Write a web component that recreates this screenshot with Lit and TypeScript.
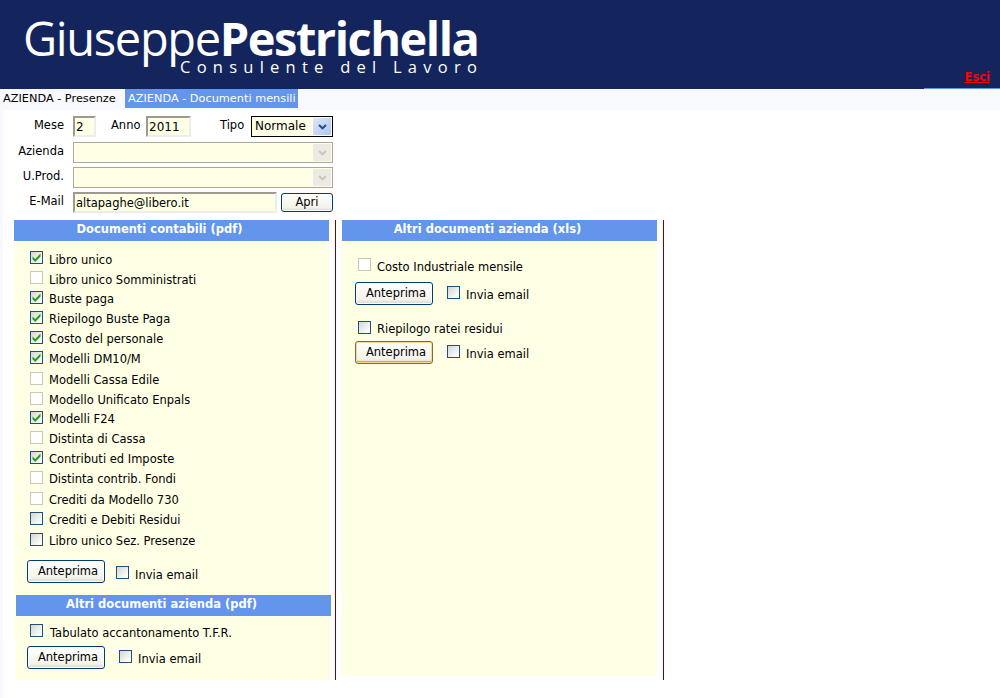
import { LitElement, html, css, svg } from "lit";
import { customElement } from "lit/decorators.js";

interface Doc { label: string; state: "on" | "off" | "dis"; h: number; low?: boolean; }
const DOCS: Doc[] = [
  { label: "Libro unico", state: "on", h: 20, low: true },
  { label: "Libro unico Somministrati", state: "dis", h: 20, low: true },
  { label: "Buste paga", state: "on", h: 20 },
  { label: "Riepilogo Buste Paga", state: "on", h: 20 },
  { label: "Costo del personale", state: "on", h: 20 },
  { label: "Modelli DM10/M", state: "on", h: 21 },
  { label: "Modelli Cassa Edile", state: "dis", h: 20 },
  { label: "Modello Unificato Enpals", state: "dis", h: 19 },
  { label: "Modelli F24", state: "on", h: 20 },
  { label: "Distinta di Cassa", state: "dis", h: 20 },
  { label: "Contributi ed Imposte", state: "on", h: 20 },
  { label: "Distinta contrib. Fondi", state: "dis", h: 21 },
  { label: "Crediti da Modello 730", state: "dis", h: 20 },
  { label: "Crediti e Debiti Residui", state: "off", h: 21 },
  { label: "Libro unico Sez. Presenze", state: "off", h: 20 },
];

const check = svg`<svg viewBox="0 0 11 11" width="11" height="11"><path d="M1.5 4.5 L4.2 7 L9.5 1.5 L9.5 4.5 L4.2 10 L1.5 7.2 Z" fill="#21a121"/></svg>`;
const chevron = svg`<svg viewBox="0 0 9 6" width="9" height="6"><path d="M1 1 L4.5 4.3 L8 1" fill="none" stroke="currentColor" stroke-width="2"/></svg>`;

@customElement("app-root")
export class AppRoot extends LitElement {
  static styles = css`
    :host { display: block; width: 1000px; height: 698px; overflow: hidden; background: #fff; font-family: "DejaVu Sans", Verdana, sans-serif; font-size: 11.5px; color: #000; }
    * { box-sizing: border-box; }
    .header { height: 89px; background: #14245c; display: flex; justify-content: space-between; padding-left: 23px; }
    .logo { width: 456px; padding-top: 13px; color: #fff; }
    .logo-name { font-family: "Open Sans", sans-serif; font-size: 47px; line-height: 50px; letter-spacing: -1.35px; white-space: nowrap; }
    .logo-name b { font-weight: 700; letter-spacing: -1.5px; }
    .logo-sub { font-family: "Open Sans", sans-serif; font-size: 16.5px; line-height: 14px; letter-spacing: 6.25px; margin: -3px 0 0 157px; white-space: nowrap; }
    .header-right { width: 76px; display: flex; flex-direction: column; justify-content: flex-end; align-items: flex-end; }
    .esci { color: #f00; font-weight: 700; font-size: 11.5px; line-height: 14px; margin: 0 10px 4px 0; text-decoration: underline; }
    .header-line { width: 76px; height: 1px; background: #6495ed; }
    .tabs { height: 21px; background: #f8f9ff; display: flex; padding-left: 3px; align-items: flex-start; font-size: 11.3px; }
    .tab { height: 19px; line-height: 19px; width: 122px; white-space: nowrap; }
    .tab.active { background: #6495ed; color: #fff; padding: 0 0 0 3px; width: 173px; }
    .body { border-left: 3px solid #f8f9ff; height: 588px; }
    .form { padding-top: 6px; width: 330px; }
    .row { display: grid; grid-template-columns: 61px 1fr; column-gap: 9px; align-items: start; }
    .row1 { height: 26px; }
    .row2 { height: 25px; }
    .row-main { display: flex; align-items: flex-start; }
    .lbl { text-align: right; line-height: 18px; }
    .input { height: 21px; background: #ffffe6; border: 2px solid #ededed; border-left-color: #9c9a91; border-top-color: #9c9a91; font-size: 12px; line-height: 17px; padding: 1px 0 0 1px; color: #000; }
    .input.m { width: 23px; }
    .input.y { width: 45px; }
    .input.mail { width: 204px; font-size: 11.5px; }
    .sel { height: 21px; background: #ffffe6; border: 1px solid #aca899; display: flex; justify-content: flex-end; align-items: center; padding: 1px; width: 260px; }
    .sel .arrow, .tipo .arrow { width: 18px; height: 17px; display: flex; align-items: center; justify-content: center; border-radius: 1px; }
    .sel .arrow { background: #eceae2; color: #c9c7ba; }
    .tipo { width: 82px; height: 21px; background: #ffffe6; border: 1px solid #000; display: flex; justify-content: space-between; align-items: center; padding: 1px; line-height: 17px; font-size: 12px; }
    .tipo span { padding-left: 2px; }
    .tipo .arrow { background: linear-gradient(135deg, #dbe6fb, #afc6f4); color: #2a4a8c; }
    .mini { line-height: 18px; }
    .mini.anno { margin-left: 15px; width: 35px; }
    .mini.tp { margin-left: 29px; width: 31px; }
    .btn { height: 23px; border: 1px solid #003c74; border-radius: 3px; background: linear-gradient(#fff, #f3f2ea 80%, #d9d5c8); box-shadow: inset 0 0 0 1px #fff; display: flex; align-items: center; justify-content: center; line-height: 1; padding: 1px 0 0 4px; white-space: nowrap; }
    .btn.apri { width: 52px; height: 19px; margin: 1px 0 0 4px; padding: 0; }
    .btn.prev { width: 78px; flex: none; }
    .btn.focus { border-color: #7a6a3c; box-shadow: inset 0 0 0 1px #fbd98a, inset 0 -2px 0 #eda52d; }
    .columns { display: flex; align-items: stretch; height: 460px; margin-top: 7px; padding-left: 11px; }
    .col-left { width: 317px; background: linear-gradient(#ffffe6, #ffffe6) no-repeat 0 0 / 2px 420px; }
    .sep { width: 1px; background: #800000; margin-left: 4px; }
    .col-right { width: 315px; margin-left: 6px; background: #ffffe6; height: 456px; }
    .sep2 { width: 1px; background: #800000; margin-left: 6px; }
    .left-top { width: 315px; height: 375px; background: #ffffe6; }
    .left-bottom { margin-left: 2px; width: 315px; height: 85px; background: #ffffe6; }
    .h { background: #6495ed; color: #fff; font-weight: 700; height: 21px; line-height: 19px; text-align: center; white-space: nowrap; padding-right: 24px; }
    .list { padding: 10px 0 0 16px; }
    .list.l2 { padding: 8px 0 0 14px; }
    .list.r1 { padding-top: 17px; }
    .list.r2 { padding-top: 16px; }
    .item { display: flex; align-items: flex-start; line-height: 15px; white-space: nowrap; }
    .cb { width: 13px; height: 13px; flex: none; border: 1px solid #1c5180; background: linear-gradient(135deg, #d6d6cf, #fbfbf8 80%); display: block; margin-right: 6px; }
    .cb.dis { border-color: #cac8bb; background: #fff; }
    .cb svg { display: block; }
    .item .t { padding-top: 1px; }
    .item.low .t { padding-top: 2px; }
    .item.tfr .cb { margin-right: 7px; }
    .actions { display: flex; align-items: flex-start; white-space: nowrap; }
    .actions .cb { margin: 4px 6px 0 14px; }
    .actions .t { padding-top: 6px; line-height: 15px; }
    .actions.first .cb { margin: 6px 6px 0 11px; }
    .actions.first .t { padding-top: 8px; }
    .a1 { margin: 7px 0 0 13px; }
    .a2 { margin: 0 0 0 11px; }
    .a3 { margin: 0 0 0 13px; }
  `;

  private cb(state: string) {
    return html`<span class="cb ${state === "dis" ? "dis" : ""}">${state === "on" ? check : ""}</span>`;
  }

  private actions(cls: string, focus = false) {
    return html`<div class="actions ${cls}">
      <div class="btn prev ${focus ? "focus" : ""}">Anteprima</div>
      <span class="cb"></span><span class="t">Invia email</span>
    </div>`;
  }

  render() {
    return html`
      <div class="header">
        <div class="logo">
          <div class="logo-name">Giuseppe<b>Pestrichella</b></div>
          <div class="logo-sub">Consulente del Lavoro</div>
        </div>
        <div class="header-right">
          <span class="esci">Esci</span>
          <div class="header-line"></div>
        </div>
      </div>
      <div class="tabs">
        <div class="tab">AZIENDA - Presenze</div>
        <div class="tab active">AZIENDA - Documenti mensili</div>
      </div>
      <div class="body">
        <div class="form">
          <div class="row row1">
            <div class="lbl">Mese</div>
            <div class="row-main">
              <div class="input m">2</div>
              <div class="mini anno">Anno</div>
              <div class="input y">2011</div>
              <div class="mini tp">Tipo</div>
              <div class="tipo"><span>Normale</span><div class="arrow">${chevron}</div></div>
            </div>
          </div>
          <div class="row row2">
            <div class="lbl">Azienda</div>
            <div class="sel"><div class="arrow">${chevron}</div></div>
          </div>
          <div class="row row2">
            <div class="lbl">U.Prod.</div>
            <div class="sel"><div class="arrow">${chevron}</div></div>
          </div>
          <div class="row">
            <div class="lbl">E-Mail</div>
            <div class="row-main">
              <div class="input mail">altapaghe@libero.it</div>
              <div class="btn apri">Apri</div>
            </div>
          </div>
        </div>
        <div class="columns">
          <div class="col-left">
            <div class="left-top">
              <div class="h">Documenti contabili (pdf)</div>
              <div class="list">
                ${DOCS.map(d => html`<div class="item ${d.low ? "low" : ""}" style="height:${d.h}px">${this.cb(d.state)}<span class="t">${d.label}</span></div>`)}
              </div>
              ${this.actions("first a1")}
            </div>
            <div class="left-bottom">
              <div class="h">Altri documenti azienda (pdf)</div>
              <div class="list l2">
                <div class="item tfr low" style="height:22px">${this.cb("off")}<span class="t">Tabulato accantonamento T.F.R.</span></div>
              </div>
              ${this.actions("a2")}
            </div>
          </div>
          <div class="sep"></div>
          <div class="col-right">
            <div class="h">Altri documenti azienda (xls)</div>
            <div class="list r1">
              <div class="item low" style="height:24px">${this.cb("dis")}<span class="t">Costo Industriale mensile</span></div>
            </div>
            ${this.actions("a3")}
            <div class="list r2">
              <div class="item" style="height:20px">${this.cb("off")}<span class="t">Riepilogo ratei residui</span></div>
            </div>
            ${this.actions("a3", true)}
          </div>
          <div class="sep2"></div>
        </div>
      </div>
    `;
  }
}
